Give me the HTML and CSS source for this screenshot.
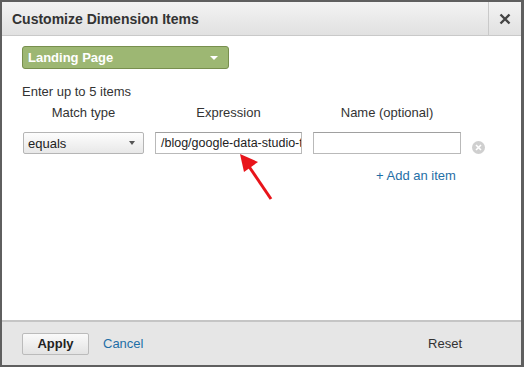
FILE: index.html
```html
<!DOCTYPE html>
<html lang="en">
<head>
    <meta charset="UTF-8">
    <title>Customize Dimension Items</title>
    <link rel="stylesheet" href="styles.css">
</head>
<body>
    <div class="dialog">
        <header class="dialog-header">
            <h1>Customize Dimension Items</h1>
            <button class="close-btn" aria-label="Close">
                <svg width="12" height="12" viewBox="0 0 12 12"><path d="M1.5 1.5L10.5 10.5M10.5 1.5L1.5 10.5" stroke="#444" stroke-width="2.4"/></svg>
            </button>
        </header>

        <div class="dialog-body">
            <div class="dimension-select">
                <span>Landing Page</span>
                <span class="caret-white"></span>
            </div>

            <div class="hint">Enter up to 5 items</div>

            <div class="items-grid">
                <div class="col-label">Match type</div>
                <div class="col-label">Expression</div>
                <div class="col-label">Name (optional)</div>
                <div></div>

                <div class="match-select">
                    <span>equals</span>
                    <span class="caret-grey"></span>
                </div>
                <div class="text-input">/blog/google-data-studio-t</div>
                <div class="text-input"></div>
                <div class="remove-btn">
                    <svg width="13" height="13" viewBox="0 0 13 13"><circle cx="6.5" cy="6.5" r="6.5" fill="#cfcfcf"/><path d="M4 4L9 9M9 4L4 9" stroke="#fff" stroke-width="1.6"/></svg>
                </div>
            </div>

            <div class="add-row">
                <a class="link" href="#">+ Add an item</a>
            </div>

            <svg class="arrow" width="40" height="50" viewBox="0 0 40 50">
                <path d="M33 46L10 12" stroke="#e8141a" stroke-width="3"/>
                <polygon points="2,1 20,9 6,19" fill="#e8141a"/>
            </svg>
        </div>

        <footer class="dialog-footer">
            <button class="apply-btn">Apply</button>
            <a class="link" href="#">Cancel</a>
            <span class="reset">Reset</span>
        </footer>
    </div>
</body>
</html>
```

FILE: styles.css
```css
:root {
    --frame: #5f5f5f;
    --text: #333;
    --link: #1f6fa6;
    --green: #9db773;
    --green-border: #788f4e;
}

body {
    margin: 0;
    font-family: 'Liberation Sans', Arial, sans-serif;
    font-size: 13px;
    color: var(--text);
}

.dialog {
    width: 524px;
    height: 367px;
    box-sizing: border-box;
    border: 2px solid var(--frame);
    border-right-width: 3px;
    display: flex;
    flex-direction: column;
    background: #fff;
}

.dialog-header {
    height: 33px;
    display: flex;
    align-items: center;
    background: linear-gradient(#f3f3f3, #e1e1e1);
    border-bottom: 1px solid #c9c9c9;
}

.dialog-header h1 {
    flex: 1;
    margin: 0;
    padding-left: 10px;
    font-size: 14px;
    font-weight: bold;
    color: #333;
}

.close-btn {
    width: 33px;
    height: 33px;
    border: none;
    border-left: 1px solid #c9c9c9;
    background: transparent;
    padding: 0;
    display: flex;
    align-items: center;
    justify-content: center;
}

.dialog-body {
    flex: 1;
    position: relative;
    padding: 10px 20px 0;
}

.dimension-select {
    width: 207px;
    height: 23px;
    box-sizing: border-box;
    border: 1px solid var(--green-border);
    border-radius: 3px;
    background: var(--green);
    color: #fff;
    font-weight: bold;
    display: flex;
    align-items: center;
    justify-content: space-between;
    padding: 0 10px 0 5px;
}

.caret-white,
.caret-grey {
    width: 0;
    height: 0;
    border-left: 4px solid transparent;
    border-right: 4px solid transparent;
    border-top: 4px solid #fff;
}

.caret-grey {
    border-left-width: 3.5px;
    border-right-width: 3.5px;
    border-top: 4px solid #555;
}

.hint {
    margin-top: 15px;
    line-height: 15px;
}

.items-grid {
    display: grid;
    grid-template-columns: 121px 147px 148px 13px;
    column-gap: 11px;
    row-gap: 12px;
    margin-left: 1px;
    margin-top: 6px;
}

.col-label {
    text-align: center;
    line-height: 15px;
}

.match-select {
    height: 22px;
    box-sizing: border-box;
    border: 1px solid #b5b5b5;
    border-radius: 2px;
    background: linear-gradient(#fdfdfd, #e8e8e8);
    display: flex;
    align-items: center;
    justify-content: space-between;
    padding: 0 8px 0 4px;
    color: #222;
}

.text-input {
    height: 22px;
    box-sizing: border-box;
    border: 1px solid #b9b9b9;
    border-top-color: #a0a0a0;
    padding: 0 4px 0 5px;
    font-size: 12.5px;
    line-height: 20px;
    white-space: nowrap;
    overflow: hidden;
    color: #222;
}

.remove-btn {
    display: flex;
    align-items: center;
    justify-content: center;
    padding-top: 8px;
}

.add-row {
    margin-top: 14px;
    padding-left: 354px;
}

.link {
    color: var(--link);
    text-decoration: none;
}

.arrow {
    position: absolute;
    left: 236px;
    top: 117px;
}

.dialog-footer {
    height: 43px;
    border-top: 2px solid #c5c5c5;
    background: #e6e6e6;
    display: flex;
    align-items: center;
    padding: 0 20px;
}

.apply-btn {
    width: 67px;
    height: 22px;
    border: 1px solid #bbb;
    border-radius: 2px;
    background: linear-gradient(#fafafa, #e3e3e3);
    font-family: inherit;
    font-size: 13px;
    font-weight: bold;
    color: #222;
    margin-right: 14px;
}

.reset {
    margin-left: auto;
    margin-right: 39px;
    color: #333;
}
```
